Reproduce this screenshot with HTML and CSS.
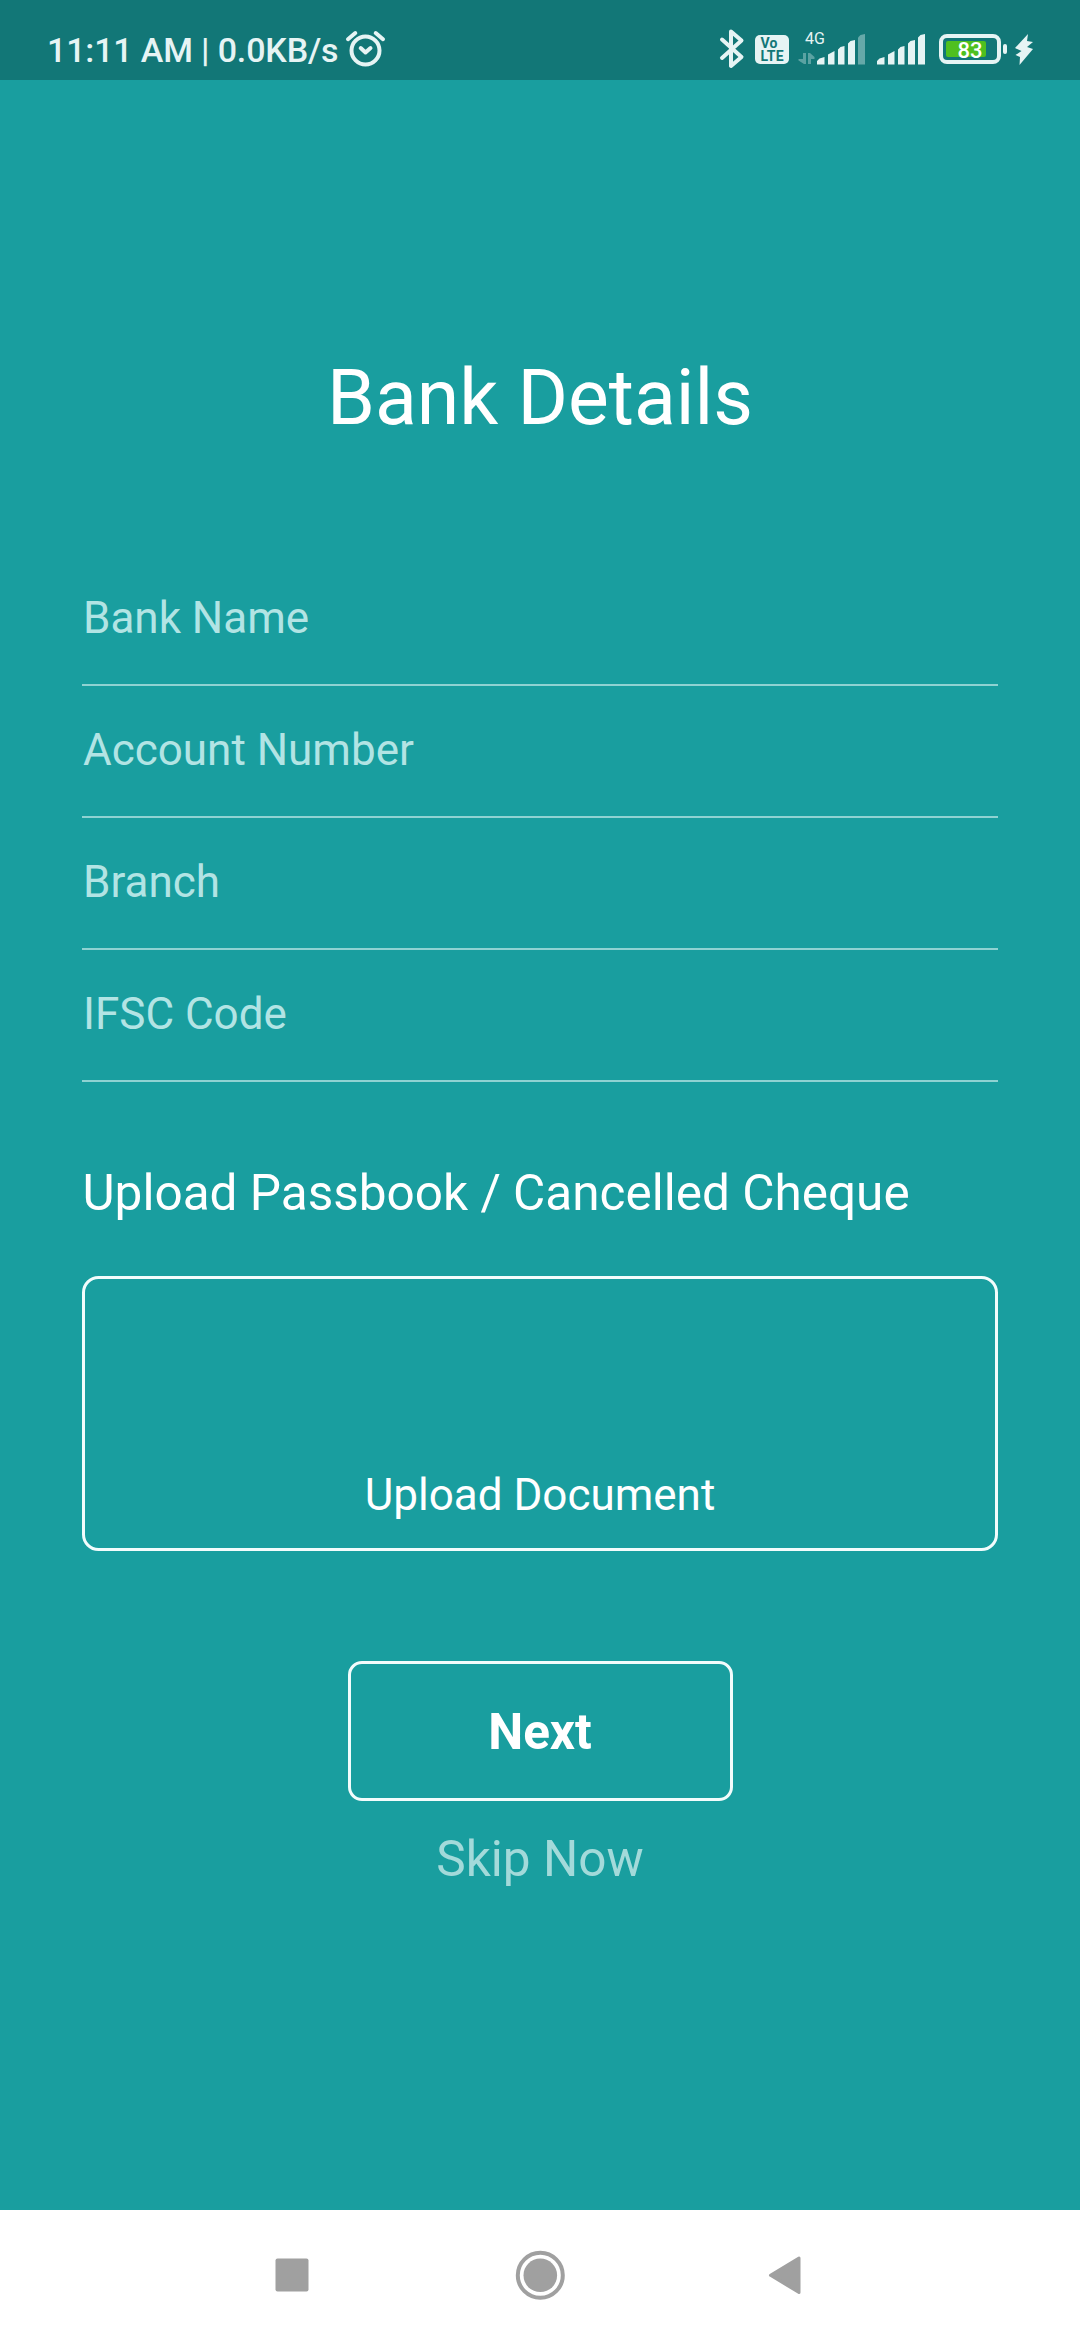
FILE: index.html
```html
<!DOCTYPE html>
<html lang="en">
<head>
<meta charset="utf-8">
<title>Bank Details</title>
<link rel="stylesheet" href="styles.css">
</head>
<body>
<div class="screen">
  <header class="status">
    <div class="status-left">
      <span class="clock">11:11 AM | 0.0KB/s</span>
      <svg class="alarm" width="42" height="40" viewBox="345 29 42 40" fill="none" stroke="#e6f4f4" stroke-width="4" stroke-linecap="round" stroke-linejoin="round">
        <circle cx="365.5" cy="50.5" r="14"/>
        <path d="M348 39.2L355.3 33M383 39.2L375.7 33M360.7 48L365.5 52.5L370.5 48"/>
      </svg>
    </div>
    <div class="status-right">
      <svg width="76" height="42" viewBox="718 28 76 42">
        <path d="M722 39.5L741.5 57L731 66V31.5L741.5 40.5L722 58" fill="none" stroke="#e6f4f4" stroke-width="4" stroke-linecap="round" stroke-linejoin="round"/>
        <rect x="755" y="35" width="34" height="29" rx="5" fill="#e6f4f4"/>
        <text x="760.5" y="48" class="badge-text" textLength="17">Vo</text>
        <text x="760.5" y="60.5" class="badge-text" textLength="23">LTE</text>
      </svg>
      <svg width="74" height="42" viewBox="794 28 74 42" fill="#e6f4f4">
        <text x="805" y="44" class="network" textLength="20">4G</text>
        <path d="M798.5 60.500L804 64H806V53H803V59H798.500ZM808 64V53H810L814.500 57V59H811V64Z" opacity=".35"/>
        <path d="M817 61L819.500 58.500L824.500 57V64.500H817ZM828 54.500L834.500 51V64.500H828ZM838 49.500L840.500 47L844.500 46V64.500H838ZM848 43.500L850.500 41L855 40V64.500H848Z"/>
        <path d="M858 37.500L860.500 35L865 34V64.500H858Z" opacity=".4"/>
      </svg>
      <svg width="52" height="42" viewBox="874 28 52 42" fill="#e6f4f4">
        <path d="M877 61L879.500 58.500L884.500 57V64.500H877ZM888 54.500L894.500 51V64.500H888ZM898 49.500L900.500 47L904.500 46V64.500H898ZM908 43.500L910.500 41L915 40V64.500H908ZM918 37.500L920.500 35L925 34V64.500H918Z"/>
      </svg>
      <svg width="98" height="42" viewBox="936 28 98 42">
        <rect x="941" y="36" width="58" height="26" rx="6" fill="none" stroke="#e6f4f4" stroke-width="4"/>
        <rect x="946" y="41" width="40" height="16" rx="2" fill="#4fc01f"/>
        <rect x="1003" y="44" width="4" height="10" rx="2" fill="#e6f4f4"/>
        <text x="957.500" y="57.500" class="charge" textLength="25">83</text>
        <path d="M1028 34L1015 48L1021.500 51L1015.500 55L1020 57L1019.500 65L1033 49L1027 47L1033 42L1027 41Z" fill="#e6f4f4"/>
      </svg>
    </div>
  </header>
  <main class="content">
    <h1 class="title">Bank Details</h1>
    <form class="form">
      <div class="field">Bank Name</div>
      <div class="field">Account Number</div>
      <div class="field">Branch</div>
      <div class="field">IFSC Code</div>
    </form>
    <h2 class="upload-title">Upload Passbook / Cancelled Cheque</h2>
    <div class="upload-box">Upload Document</div>
    <button class="next" type="button">Next</button>
    <a class="skip">Skip Now</a>
  </main>
  <nav class="navbar">
    <svg width="50" height="50" viewBox="0 0 50 50"><rect x="8.500" y="8.500" width="33" height="33" rx="2" fill="#a0a0a0"/></svg>
    <svg width="50" height="50" viewBox="0 0 50 50"><circle cx="25.300" cy="25.300" r="22.500" fill="none" stroke="#a0a0a0" stroke-width="4"/><circle cx="25.300" cy="25.300" r="16.800" fill="#a0a0a0"/></svg>
    <svg width="50" height="50" viewBox="0 0 50 50"><path d="M7.500 25.300L36 8V42.500Z" fill="#a0a0a0" stroke="#a0a0a0" stroke-width="3" stroke-linejoin="round"/></svg>
  </nav>
</div>
</body>
</html>
```

FILE: styles.css
```css
* { box-sizing: border-box; }
body { margin: 0; font-family: Roboto, sans-serif; }
.screen {
  display: flex;
  flex-direction: column;
  width: 1080px;
  height: 2340px;
  background: #199e9f;
  color: #fff;
}
.status {
  display: flex;
  justify-content: space-between;
  height: 80px;
  padding: 28px 46px 0 47px;
  background: #127777;
}
.status-left { display: flex; }
.clock {
  width: 298px;
  font-size: 34px;
  font-weight: 500;
  letter-spacing: -0.15px;
  line-height: 44px;
  color: #e6f4f4;
  white-space: nowrap;
}
.alarm { margin-top: 1px; }
.status-right { display: flex; }
.status-right svg:nth-child(3) { margin-left: 6px; }
.status-right svg:nth-child(4) { margin-left: 10px; }
.badge-text { font-size: 14px; font-weight: 700; fill: #127777; }
.network { font-size: 16px; }
.charge { font-size: 22px; font-weight: 500; fill: #fff; }
.content {
  display: flex;
  flex: 1;
  flex-direction: column;
  align-items: center;
  padding: 273px 82px 0;
}
.title { margin: 0; font-size: 77px; font-weight: 400; line-height: 90px; }
.form { width: 100%; margin-top: 111px; }
.field {
  height: 132px;
  padding: 0 0 2px 1px;
  border-bottom: 2px solid #8fd2d2;
  font-size: 44px;
  line-height: 128px;
  color: #b2e4e4;
}
.upload-title {
  align-self: flex-start;
  margin: 82px 0 0;
  padding-left: 0.5px;
  font-size: 49.5px;
  font-weight: 400;
  line-height: 58px;
  white-space: nowrap;
}
.upload-box {
  display: flex;
  align-items: flex-end;
  justify-content: center;
  width: 100%;
  height: 275px;
  margin-top: 54px;
  padding-bottom: 27px;
  border: 3px solid #f2fcfc;
  border-radius: 16.5px;
  font-size: 44px;
  line-height: 52px;
}
.next {
  width: 385px;
  height: 140px;
  margin-top: 110px;
  padding: 2px 0 0;
  border: 3px solid #f2fcfc;
  border-radius: 14px;
  background: none;
  color: #fff;
  font: 700 49.5px/58px Roboto, sans-serif;
}
.skip { margin-top: 29px; font-size: 49.5px; line-height: 58px; color: #a3dada; }
.navbar {
  display: flex;
  justify-content: space-between;
  height: 130px;
  padding: 40px 267px 0 267px;
  background: #fff;
}
```
